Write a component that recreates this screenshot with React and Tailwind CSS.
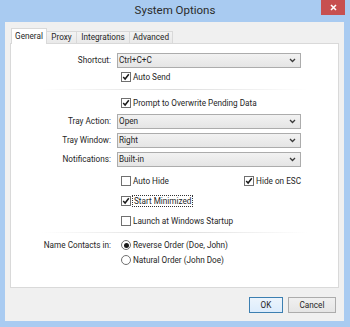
import React from 'react'

const font = { fontFamily: 'Roboto, "Noto Sans", sans-serif' }

function Chevron() {
  return (
    <svg width="7" height="5" viewBox="0 0 7 5" className="mr-[4px]">
      <path d="M1 1 L3.5 3.5 L6 1" fill="none" stroke="#3a3a3a" strokeWidth="1.3" />
    </svg>
  )
}

function Select({ value }) {
  return (
    <div className="w-[184px] h-[15px] flex items-center justify-between border border-[#acacac] bg-gradient-to-b from-[#f2f2f2] to-[#e5e5e5] pl-[1px]">
      <span>{value}</span>
      <Chevron />
    </div>
  )
}

function Check({ checked }) {
  return (
    <div className="w-[10px] h-[10px] border border-[#707070] bg-white flex items-center justify-center shrink-0">
      {checked && (
        <svg width="8" height="8" viewBox="0 0 8 8">
          <path d="M1.2 4 L3.1 6 L6.8 1.3" fill="none" stroke="#1a1a1a" strokeWidth="1.5" />
        </svg>
      )}
    </div>
  )
}

function Radio({ checked }) {
  return (
    <div className="w-[10px] h-[10px] rounded-full border border-[#707070] bg-white flex items-center justify-center shrink-0">
      {checked && <div className="w-[5px] h-[5px] rounded-full bg-[#1a1a1a]" />}
    </div>
  )
}

function Row({ label, children, className = '' }) {
  return (
    <div className={`flex items-center ${className}`}>
      <div className="w-[101px] text-right pr-[1px]">{label}</div>
      <div className="ml-[5px] flex items-center">{children}</div>
    </div>
  )
}

function CheckRow({ checked, children, className = '' }) {
  return (
    <div className={`flex items-center h-[10px] pl-[110px] ${className}`}>
      <Check checked={checked} />
      <span className="ml-[2px]">{children}</span>
    </div>
  )
}

function Separator({ className = '' }) {
  return <div className={`h-px mx-[30px] bg-gradient-to-r from-transparent via-[#dcdcdc] to-transparent ${className}`} />
}

export default function App() {
  return (
    <div className="w-[350px] h-[327px] bg-[#a9cbf1] flex flex-col text-[8.2px] text-[#262626] leading-none" style={font}>
      <div className="h-[22px] relative flex items-center justify-center">
        <span className="text-[11.5px] text-[#2b2b2b]">System Options</span>
        <div className="absolute top-0 right-[5px] w-[24px] h-[15px] bg-[#c75050] flex items-center justify-center">
          <svg width="7" height="7" viewBox="0 0 7 7">
            <path d="M1 1 L6 6 M6 1 L1 6" stroke="#fff" strokeWidth="1.6" />
          </svg>
        </div>
      </div>
      <div className="ml-[5px] mr-[6px] mb-[6px] flex-1 bg-[#f0f0f0] flex flex-col">
        <div className="mt-[6px] ml-[6px] h-[15px] flex items-end">
          <div className="relative z-10 h-[16px] -mb-[1px] w-[36px] bg-white border border-b-0 border-[#d9d9d9] flex items-center justify-center pb-[1px]">General</div>
          <div className="h-[12px] w-[30px] border border-b-0 border-l-0 border-[#d9d9d9] bg-gradient-to-b from-[#f3f3f3] to-[#e9e9e9] flex items-center justify-center">Proxy</div>
          <div className="h-[12px] w-[53px] border border-b-0 border-l-0 border-[#d9d9d9] bg-gradient-to-b from-[#f3f3f3] to-[#e9e9e9] flex items-center justify-center">Integrations</div>
          <div className="h-[12px] w-[43px] border border-b-0 border-l-0 border-[#d9d9d9] bg-gradient-to-b from-[#f3f3f3] to-[#e9e9e9] flex items-center justify-center">Advanced</div>
        </div>
        <div className="mx-[5px] h-[245px] bg-white border border-[#d9d9d9] flex flex-col">
          <Row label="Shortcut:" className="mt-[9px]"><Select value="Ctrl+C+C" /></Row>
          <CheckRow checked className="mt-[4px]">Auto Send</CheckRow>
          <Separator className="mt-[7px]" />
          <CheckRow checked className="mt-[8px]">Prompt to Overwrite Pending Data</CheckRow>
          <Row label="Tray Action:" className="mt-[6px]"><Select value="Open" /></Row>
          <Row label="Tray Window:" className="mt-[4px]"><Select value="Right" /></Row>
          <Row label="Notifications:" className="mt-[4px]"><Select value="Built-in" /></Row>
          <div className="mt-[9px] h-[10px] pl-[110px] flex items-center">
            <div className="w-[180px] flex items-center justify-between">
              <div className="flex items-center">
                <Check />
                <span className="ml-[2px]">Auto Hide</span>
              </div>
              <div className="flex items-center">
                <Check checked />
                <span className="ml-[2px]">Hide on ESC</span>
              </div>
            </div>
          </div>
          <div className="mt-[10px] h-[10px] pl-[110px] flex items-center">
            <Check checked />
            <span className="ml-[1px] px-px py-[1px] border border-dotted border-[#333]">Start Minimized</span>
          </div>
          <CheckRow className="mt-[10px]">Launch at Windows Startup</CheckRow>
          <Separator className="mt-[6px]" />
          <Row label="Name Contacts in:" className="mt-[7px] h-[10px]">
            <div className="pl-[4px] flex items-center">
              <Radio checked />
              <span className="ml-[2px]">Reverse Order (Doe, John)</span>
            </div>
          </Row>
          <div className="mt-[5px] h-[10px] pl-[110px] flex items-center">
            <Radio />
            <span className="ml-[2px]">Natural Order (John Doe)</span>
          </div>
        </div>
        <div className="mt-[9px] mr-[8px] flex justify-end gap-[5px]">
          <div className="w-[34px] h-[16px] border border-[#3c7fb1] bg-gradient-to-b from-[#ecf4fc] to-[#dcecfc] flex items-center justify-center">OK</div>
          <div className="w-[48px] h-[16px] border border-[#acacac] bg-gradient-to-b from-[#f0f0f0] to-[#e5e5e5] flex items-center justify-center">Cancel</div>
        </div>
      </div>
    </div>
  )
}
